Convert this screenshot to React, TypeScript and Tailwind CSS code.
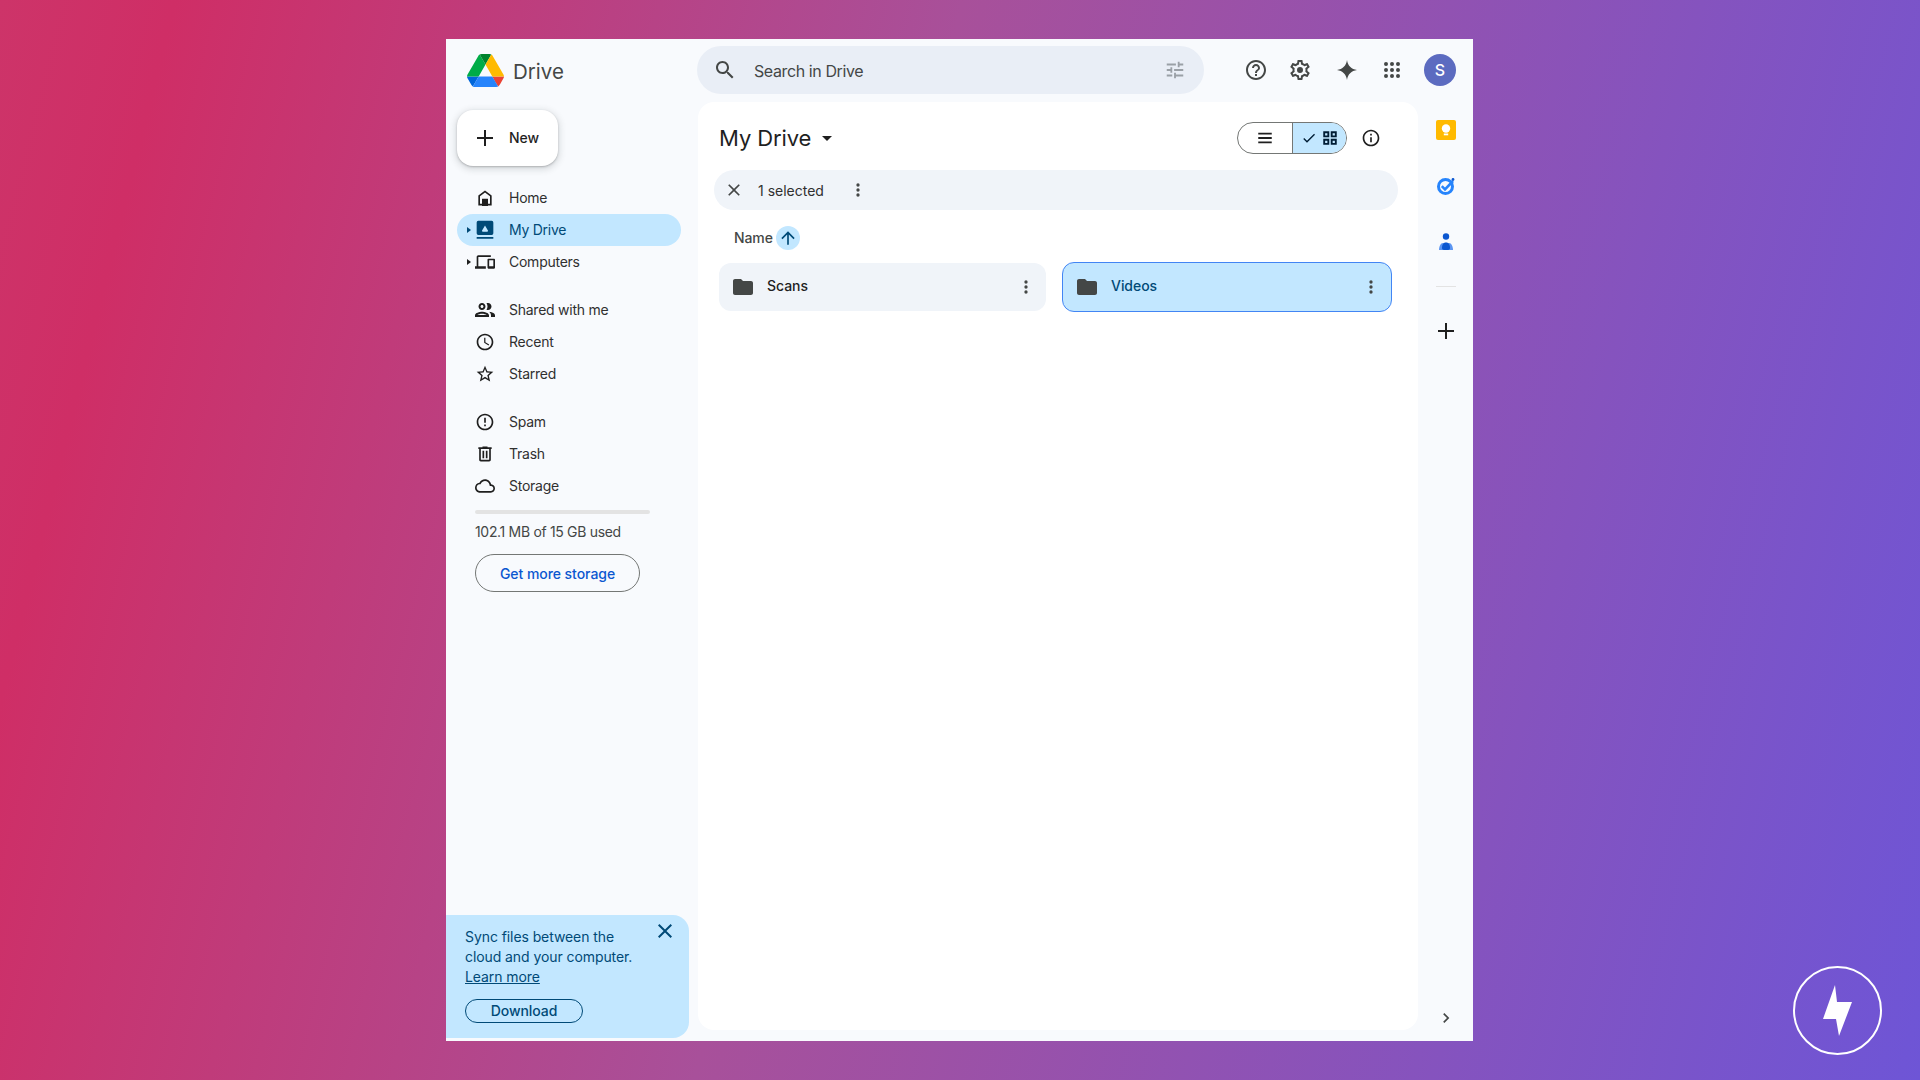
import React from "react";

const paths = {
  search:
    "M15.5 14h-.79l-.28-.27C15.41 12.59 16 11.11 16 9.5 16 5.91 13.09 3 9.5 3S3 5.91 3 9.5 5.91 16 9.5 16c1.61 0 3.09-.59 4.23-1.57l.27.28v.79l5 4.99L20.49 19l-4.99-5zm-6 0C7.01 14 5 11.99 5 9.5S7.01 5 9.5 5 14 7.01 14 9.5 11.99 14 9.5 14z",
  tune: "M3 17v2h6v-2H3zM3 5v2h10V5H3zm10 16v-2h8v-2h-8v-2h-2v6h2zM7 9v2H3v2h4v2h2V9H7zm14 4v-2H11v2h10zm-6-4h2V7h4V5h-4V3h-2v6z",
  help: "M11 18h2v-2h-2v2zm1-16C6.48 2 2 6.48 2 12s4.48 10 10 10 10-4.48 10-10S17.52 2 12 2zm0 18c-4.41 0-8-3.59-8-8s3.59-8 8-8 8 3.59 8 8-3.59 8-8 8zm0-14c-2.21 0-4 1.79-4 4h2c0-1.1.9-2 2-2s2 .9 2 2c0 2-3 1.75-3 5h2c0-2.25 3-2.5 3-5 0-2.21-1.79-4-4-4z",
  settings:
    "M19.43 12.98c.04-.32.07-.64.07-.98 0-.34-.03-.66-.07-.98l2.11-1.65c.19-.15.24-.42.12-.64l-2-3.46c-.09-.16-.26-.25-.44-.25-.06 0-.12.01-.17.03l-2.49 1c-.52-.4-1.08-.73-1.69-.98l-.38-2.65C14.46 2.18 14.25 2 14 2h-4c-.25 0-.46.18-.49.42l-.38 2.65c-.61.25-1.17.59-1.69.98l-2.49-1c-.06-.02-.12-.03-.18-.03-.17 0-.34.09-.43.25l-2 3.46c-.13.22-.07.49.12.64l2.11 1.65c-.04.32-.07.65-.07.98 0 .33.03.66.07.98l-2.11 1.65c-.19.15-.24.42-.12.64l2 3.46c.09.16.26.25.44.25.06 0 .12-.01.17-.03l2.49-1c.52.4 1.08.73 1.69.98l.38 2.65c.03.24.24.42.49.42h4c.25 0 .46-.18.49-.42l.38-2.65c.61-.25 1.17-.59 1.69-.98l2.49 1c.06.02.12.03.18.03.17 0 .34-.09.43-.25l2-3.46c.12-.22.07-.49-.12-.64l-2.11-1.65zm-1.98-1.71c.04.31.05.52.05.73 0 .21-.02.43-.05.73l-.14 1.13.89.7 1.08.84-.7 1.21-1.27-.51-1.04-.42-.9.68c-.43.32-.84.56-1.25.73l-1.06.43-.16 1.13-.2 1.35h-1.4l-.19-1.35-.16-1.13-1.06-.43c-.43-.18-.83-.41-1.23-.71l-.91-.7-1.06.43-1.27.51-.7-1.21 1.08-.84.89-.7-.14-1.13c-.03-.31-.05-.54-.05-.74s.02-.43.05-.73l.14-1.13-.89-.7-1.08-.84.7-1.21 1.27.51 1.04.42.9-.68c.43-.32.84-.56 1.25-.73l1.06-.43.16-1.13.2-1.35h1.39l.19 1.35.16 1.13 1.06.43c.43.18.83.41 1.23.71l.91.7 1.06-.43 1.27-.51.7 1.21-1.07.85-.89.7.14 1.13zM12 9a3 3 0 1 0 0 6 3 3 0 0 0 0-6z",
  spark:
    "M12 2C12.6 7.5 16.5 11.4 22 12 16.5 12.6 12.6 16.5 12 22 11.4 16.5 7.5 12.6 2 12 7.5 11.4 11.4 7.5 12 2z",
  apps: "M6 8a2 2 0 1 0 0-4 2 2 0 0 0 0 4zm6 0a2 2 0 1 0 0-4 2 2 0 0 0 0 4zm6 0a2 2 0 1 0 0-4 2 2 0 0 0 0 4zM6 14a2 2 0 1 0 0-4 2 2 0 0 0 0 4zm6 0a2 2 0 1 0 0-4 2 2 0 0 0 0 4zm6 0a2 2 0 1 0 0-4 2 2 0 0 0 0 4zM6 20a2 2 0 1 0 0-4 2 2 0 0 0 0 4zm6 0a2 2 0 1 0 0-4 2 2 0 0 0 0 4zm6 0a2 2 0 1 0 0-4 2 2 0 0 0 0 4z",
  plus: "M20 13h-7v7h-2v-7H4v-2h7V4h2v7h7v2z",
  home: "M12 3 4 9v12h16V9l-8-6zm6 16h-2.5v-6h-7v6H6v-9l6-4.5 6 4.5v9z",
  myDrive:
    "M4 1h16a2 2 0 0 1 2 2v13a2 2 0 0 1-2 2H4a2 2 0 0 1-2-2V3a2 2 0 0 1 2-2zm8 5.5L8.5 12.5a1 1 0 0 0 .9 1.5h5.2a1 1 0 0 0 .9-1.5L12 6.5zM2 20.5h20v2H2z",
  computers:
    "M4 6h15V4H4c-1.1 0-2 .9-2 2v11H0v3h13v-3H4V6zm19 2h-7c-.55 0-1 .45-1 1v10c0 .55.45 1 1 1h7c.55 0 1-.45 1-1V9c0-.55-.45-1-1-1zm-1 9h-5v-7h5v7z",
  shared:
    "M9 13.75c-2.34 0-7 1.17-7 3.5V19h14v-1.75c0-2.33-4.66-3.5-7-3.5zM4.34 17c.84-.58 2.87-1.25 4.66-1.25s3.82.67 4.66 1.25H4.34zM9 12c1.93 0 3.5-1.57 3.5-3.5S10.93 5 9 5 5.5 6.57 5.5 8.5 7.07 12 9 12zm0-5c.83 0 1.5.67 1.5 1.5S9.83 10 9 10s-1.5-.67-1.5-1.5S8.17 7 9 7zm7.04 6.81c1.16.84 1.96 1.96 1.96 3.44V19h4v-1.75c0-2.02-3.5-3.17-5.96-3.44zM15 12c1.93 0 3.5-1.57 3.5-3.5S16.93 5 15 5c-.54 0-1.04.13-1.5.35.63.89 1 1.98 1 3.15s-.37 2.26-1 3.15c.46.22.96.35 1.5.35z",
  recent:
    "M11.99 2C6.47 2 2 6.48 2 12s4.47 10 9.99 10C17.52 22 22 17.52 22 12S17.52 2 11.99 2zM12 20c-4.42 0-8-3.58-8-8s3.58-8 8-8 8 3.58 8 8-3.58 8-8 8zm.5-13H11v6l5.25 3.15.75-1.23-4.5-2.67z",
  star: "M22 9.24l-7.19-.62L12 2 9.19 8.63 2 9.24l5.46 4.73L5.82 21 12 17.27 18.18 21l-1.63-7.03L22 9.24zM12 15.4l-3.76 2.27 1-4.28-3.32-2.88 4.38-.38L12 6.1l1.71 4.04 4.38.38-3.32 2.88 1 4.28L12 15.4z",
  spam: "M11 15h2v2h-2zm0-8h2v6h-2zm.99-5C6.47 2 2 6.48 2 12s4.47 10 9.99 10C17.52 22 22 17.52 22 12S17.52 2 11.99 2zM12 20c-4.42 0-8-3.58-8-8s3.58-8 8-8 8 3.58 8 8-3.58 8-8 8z",
  trash:
    "M15 4V3H9v1H4v2h1v13c0 1.1.9 2 2 2h10c1.1 0 2-.9 2-2V6h1V4h-5zm2 15H7V6h10v13zM9 8h2v9H9zm4 0h2v9h-2z",
  cloud:
    "M12 6c2.62 0 4.88 1.86 5.39 4.43l.3 1.5 1.53.11c1.56.1 2.78 1.41 2.78 2.96 0 1.65-1.35 3-3 3H6c-2.21 0-4-1.79-4-4 0-2.05 1.53-3.76 3.56-3.97l1.07-.11.5-.95C8.08 7.14 9.94 6 12 6m0-2C9.11 4 6.6 5.64 5.35 8.04 2.34 8.36 0 10.91 0 14c0 3.31 2.69 6 6 6h13c2.76 0 5-2.24 5-5 0-2.64-2.05-4.78-4.65-4.96C18.67 6.59 15.64 4 12 4z",
  close:
    "M19 6.41L17.59 5 12 10.59 6.41 5 5 6.41 10.59 12 5 17.59 6.41 19 12 13.41 17.59 19 19 17.59 13.41 12z",
  more: "M12 8a2 2 0 1 0 0-4 2 2 0 0 0 0 4zm0 6a2 2 0 1 0 0-4 2 2 0 0 0 0 4zm0 6a2 2 0 1 0 0-4 2 2 0 0 0 0 4z",
  folder:
    "M10 4H4c-1.1 0-2 .9-2 2v12c0 1.1.9 2 2 2h16c1.1 0 2-.9 2-2V8c0-1.1-.9-2-2-2h-8l-2-2z",
  arrowUp: "M4 12l1.41 1.41L11 7.83V20h2V7.83l5.58 5.59L20 12l-8-8-8 8z",
  list: "M3 19h18v-2.4H3V19zm0-5.8h18v-2.4H3v2.4zM3 5v2.4h18V5H3z",
  check: "M9 16.17 4.83 12l-1.42 1.41L9 19 21 7l-1.41-1.41z",
  grid: "M3 3h8v8H3V3zm2.5 2.5v3h3v-3h-3zM13 3h8v8h-8V3zm2.5 2.5v3h3v-3h-3zM3 13h8v8H3v-8zm2.5 2.5v3h3v-3h-3zM13 13h8v8h-8v-8zm2.5 2.5v3h3v-3h-3z",
  info: "M11 7h2v2h-2zm0 4h2v6h-2zm1-9C6.48 2 2 6.48 2 12s4.48 10 10 10 10-4.48 10-10S17.52 2 12 2zm0 18c-4.41 0-8-3.59-8-8s3.59-8 8-8 8 3.59 8 8-3.59 8-8 8z",
  caret: "M7 10l5 5 5-5H7z",
  chevron: "M8.59 16.59 13.17 12 8.59 7.41 10 6l6 6-6 6z",
};

function Icon(input: { d: string; className?: string }) {
  return (
    <svg viewBox="0 0 24 24" fill="currentColor" className={input.className}>
      <path d={input.d} />
    </svg>
  );
}

function DriveLogo() {
  return (
    <svg viewBox="0 0 87.3 78" className="h-[33px] w-[37px]">
      <path d="m6.6 66.85 3.85 6.65c.8 1.4 1.95 2.5 3.3 3.3l13.75-23.8h-27.5c0 1.55.4 3.1 1.2 4.5z" fill="#0066da" />
      <path d="m43.65 25-13.75-23.8c-1.35.8-2.5 1.9-3.3 3.3l-25.4 44a9.06 9.06 0 0 0 -1.2 4.5h27.5z" fill="#00ac47" />
      <path d="m73.55 76.8c1.35-.8 2.5-1.9 3.3-3.3l1.6-2.75 7.65-13.25c.8-1.4 1.2-2.95 1.2-4.5h-27.502l5.852 11.5z" fill="#ea4335" />
      <path d="m43.65 25 13.75-23.8c-1.35-.8-2.9-1.2-4.5-1.2h-18.5c-1.6 0-3.15.45-4.5 1.2z" fill="#00832d" />
      <path d="m59.8 53h-32.3l-13.75 23.8c1.35.8 2.9 1.2 4.5 1.2h50.8c1.6 0 3.15-.45 4.5-1.2z" fill="#2684fc" />
      <path d="m73.4 26.5-12.7-22c-.8-1.4-1.95-2.5-3.3-3.3l-13.75 23.8 16.15 28h27.45c0-1.55-.4-3.1-1.2-4.5z" fill="#ffba00" />
    </svg>
  );
}

function KeepIcon() {
  return (
    <svg viewBox="0 0 20 20" className="h-5 w-5">
      <rect width="20" height="20" rx="2" fill="#ffba00" />
      <circle cx="10" cy="8.5" r="4.2" fill="#fff" />
      <rect x="7.8" y="13.5" width="4.4" height="1.8" fill="#fff" />
    </svg>
  );
}

function TasksIcon() {
  return (
    <svg viewBox="0 0 20 20" className="h-5 w-5">
      <circle cx="9.5" cy="10.5" r="7" fill="none" stroke="#2684fc" strokeWidth="3" />
      <path d="M5.8 10.2 9 13.4l8-8.4" fill="none" stroke="#2684fc" strokeWidth="2.6" />
      <circle cx="17" cy="3.5" r="1.4" fill="#0b57d0" />
    </svg>
  );
}

function ContactsIcon() {
  return (
    <svg viewBox="0 0 20 20" className="h-5 w-5">
      <circle cx="10" cy="4.5" r="3.2" fill="#0b57d0" />
      <path d="M3 18c0-3.5 1.6-7 4-7h6c2.4 0 4 3.5 4 7H3z" fill="#5b95f2" />
      <path d="M6 16c0-3 1-5.6 4-5.6s4 2.6 4 5.6c0 1.2-.8 2-2 2H8c-1.2 0-2-.8-2-2z" fill="#0b57d0" />
    </svg>
  );
}

const navGroups = [
  [
    { label: "Home", icon: paths.home, door: true },
    { label: "My Drive", icon: paths.myDrive, active: true, arrow: true },
    { label: "Computers", icon: paths.computers, arrow: true },
  ],
  [
    { label: "Shared with me", icon: paths.shared, big: true },
    { label: "Recent", icon: paths.recent },
    { label: "Starred", icon: paths.star },
  ],
  [
    { label: "Spam", icon: paths.spam },
    { label: "Trash", icon: paths.trash },
    { label: "Storage", icon: paths.cloud },
  ],
];

function NavRow(input: {
  label: string;
  icon: string;
  active?: boolean;
  arrow?: boolean;
  door?: boolean;
  big?: boolean;
}) {
  return (
    <div
      className={
        input.active
          ? "relative flex h-8 w-[224px] items-center rounded-full bg-[#c2e7ff] pl-[18px] text-[#004a77]"
          : "relative flex h-8 w-[224px] items-center pl-[18px] text-[#1f1f1f]"
      }
    >
      {input.arrow ? (
        <span className="absolute left-[10px] top-[13px] h-0 w-0 border-y-[3px] border-l-[4px] border-y-transparent border-l-current" />
      ) : null}
      <span className="relative flex h-5 w-5 items-center justify-center">
        <Icon d={input.icon} className={input.big ? "h-6 w-6 shrink-0" : "h-5 w-5"} />
        {input.door ? <span className="absolute left-[7px] top-[11px] h-[7px] w-[6px] bg-[#1f1f1f]" /> : null}
      </span>
      <span
        className={
          input.active
            ? "ml-[14px] text-[14px] leading-5 tracking-[-0.25px] text-[#004a77]"
            : "ml-[14px] text-[14px] leading-5 tracking-[-0.25px] text-[#303030]"
        }
      >
        {input.label}
      </span>
    </div>
  );
}

function Sidebar() {
  return (
    <aside className="flex w-[252px] shrink-0 flex-col pl-[11px]">
      <button className="mt-2 flex h-14 w-[101px] items-center rounded-2xl bg-white pl-4 text-[14px] font-medium tracking-[-0.1px] text-[#1f1f1f] shadow-[0_1px_2px_rgba(60,64,67,0.3),0_2px_6px_2px_rgba(60,64,67,0.15)]">
        <Icon d={paths.plus} className="h-6 w-6" />
        <span className="ml-3 -mt-px">New</span>
      </button>
      <nav className="mt-4 flex flex-col gap-4">
        {navGroups.map((group) => (
          <div key={group[0].label} className="flex flex-col">
            {group.map((item) => (
              <NavRow key={item.label} {...item} />
            ))}
          </div>
        ))}
      </nav>
      <div className="mt-2 ml-[18px] h-1 w-[175px] rounded-full bg-[#e3e3e3]" />
      <p className="mt-2 ml-[18px] text-[14px] leading-5 tracking-[-0.32px] text-[#444746]">102.1 MB of 15 GB used</p>
      <button className="mt-3 ml-[18px] flex h-[38px] w-[165px] items-center justify-center rounded-full border border-[#747775] text-[14px] font-medium tracking-[-0.05px] text-[#0b57d0]">
        Get more storage
      </button>
      <div className="relative mt-auto mb-[3px] -ml-[11px] h-[123px] w-[243px] rounded-r-2xl bg-[#c2e7ff] pt-3 pl-[19px] text-[14px] leading-5 tracking-[-0.08px] text-[#004a77]">
        <p>Sync files between the</p>
        <p>cloud and your computer.</p>
        <p className="underline">Learn more</p>
        <button className="mt-[12px] h-6 w-[118px] rounded-full border border-[#004a77] text-[14px] font-medium leading-none">
          Download
        </button>
        <Icon d={paths.close} className="absolute right-[12px] top-[4px] h-6 w-6" />
      </div>
    </aside>
  );
}

function FolderCard(input: { name: string; selected?: boolean }) {
  return (
    <div
      className={
        input.selected
          ? "ml-4 flex h-[50px] w-[330px] items-center rounded-xl border border-[#4285f4] bg-[#c2e7ff] pr-[10px] pl-3 text-[#004a77]"
          : "flex h-12 w-[327px] items-center rounded-xl bg-[#f0f4f9] pr-[10px] pl-3 text-[#1f1f1f]"
      }
    >
      <Icon d={paths.folder} className="h-6 w-6 text-[#444746]" />
      <span className="ml-3 -mt-[3px] flex-1 text-[14px] font-medium tracking-[-0.05px]">{input.name}</span>
      <Icon d={paths.more} className="h-5 w-5 text-[#444746]" />
    </div>
  );
}

function MainPanel() {
  return (
    <main className="mb-[11px] w-[720px] shrink-0 rounded-2xl bg-white pt-5 pr-5 pl-4">
      <div className="flex h-8 items-center pl-[5px]">
        <h1 className="text-[22px] leading-8 font-normal tracking-[-0.1px] text-[#1f1f1f]">My Drive</h1>
        <Icon d={paths.caret} className="ml-[4px] h-6 w-6 text-[#1f1f1f]" />
        <div className="ml-auto mr-[4px] flex h-8 w-[110px] overflow-hidden rounded-full border border-[#747775]">
          <div className="flex w-[55px] items-center justify-center border-r border-[#747775]">
            <Icon d={paths.list} className="h-[18px] w-[18px] text-[#1f1f1f]" />
          </div>
          <div className="flex flex-1 items-center justify-center gap-[4px] bg-[#c2e7ff] text-[#001d35]">
            <Icon d={paths.check} className="h-[16px] w-[16px]" />
            <Icon d={paths.grid} className="h-[18px] w-[18px]" />
          </div>
        </div>
        <Icon d={paths.info} className="ml-[10px] mr-[17px] h-5 w-5 text-[#1f1f1f]" />
      </div>
      <div className="mt-4 flex h-10 items-center rounded-full bg-[#f0f4f9] pl-[10px] text-[#444746]">
        <Icon d={paths.close} className="h-[20px] w-[20px] text-[#444746]" />
        <span className="ml-[14px] text-[14px] font-normal text-[#303030]">1 selected</span>
        <Icon d={paths.more} className="ml-[24px] h-5 w-5" />
      </div>
      <div className="mt-4 flex h-6 items-center pl-5">
        <span className="-mt-px text-[14px] font-medium tracking-[-0.1px] text-[#444746]">Name</span>
        <span className="ml-[3px] flex h-6 w-6 items-center justify-center rounded-full bg-[#c2e7ff]">
          <Icon d={paths.arrowUp} className="h-5 w-5 text-[#004a77]" />
        </span>
      </div>
      <div className="mt-3 flex items-center pl-[5px]">
        <FolderCard name="Scans" />
        <FolderCard name="Videos" selected />
      </div>
    </main>
  );
}

function RightRail() {
  return (
    <aside className="flex flex-1 flex-col items-center pt-[18px] pb-[13px]">
      <KeepIcon />
      <span className="mt-9">
        <TasksIcon />
      </span>
      <span className="mt-9">
        <ContactsIcon />
      </span>
      <span className="mt-[34px] h-px w-5 bg-[#e3e3e3]" />
      <Icon d={paths.plus} className="mt-[32px] h-6 w-6 text-[#1f1f1f]" />
      <Icon d={paths.chevron} className="mt-auto h-5 w-5 text-[#444746]" />
    </aside>
  );
}

export default function App() {
  return (
    <div className="relative h-[1080px] w-full overflow-hidden bg-[linear-gradient(104deg,#cd3469_0%,#cf2e66_8%,#a8509a_44%,#6e55d6_100%)] pt-[39px] pl-[446px] font-['Inter',sans-serif]">
      <div className="flex h-[1002px] w-[1027px] flex-col bg-[#f8fafd]">
        <header className="flex h-[63px] shrink-0 items-start">
          <div className="flex w-[251px] items-center pt-[12px] pl-[21px]">
            <DriveLogo />
            <span className="ml-[9px] mt-[3px] text-[20.5px] leading-[36px] text-[#444746]">Drive</span>
          </div>
          <div className="mt-[7px] flex h-12 w-[507px] items-center rounded-full bg-[#e9eef6] pr-[18px] pl-4 text-[#444746]">
            <Icon d={paths.search} className="h-6 w-6" />
            <span className="ml-[17px] mt-px flex-1 text-[16px] tracking-[-0.4px]">Search in Drive</span>
            <Icon d={paths.tune} className="h-[22px] w-[22px] text-[#9aa0a6]" />
          </div>
          <div className="mt-[7px] ml-[40px] flex h-12 items-center text-[#444746]">
            <Icon d={paths.help} className="h-6 w-6" />
            <Icon d={paths.settings} className="ml-5 h-6 w-6" />
            <Icon d={paths.spark} className="ml-[23px] h-6 w-6" />
            <Icon d={paths.apps} className="ml-[21px] h-6 w-6" />
            <span className="ml-[20px] flex h-8 w-8 items-center justify-center rounded-full bg-[#5c6bc0] text-[16px] font-medium text-white">
              S
            </span>
          </div>
        </header>
        <div className="flex min-h-0 flex-1">
          <Sidebar />
          <MainPanel />
          <RightRail />
        </div>
      </div>
      <div className="absolute top-[966px] left-[1793px] flex h-[89px] w-[89px] items-center justify-center rounded-full border-2 border-white">
        <svg viewBox="0 0 30 52" className="h-[52px] w-[30px]">
          <path d="M12 0l2 17h15L16 51l-3-17H0z" fill="#fff" />
        </svg>
      </div>
    </div>
  );
}
